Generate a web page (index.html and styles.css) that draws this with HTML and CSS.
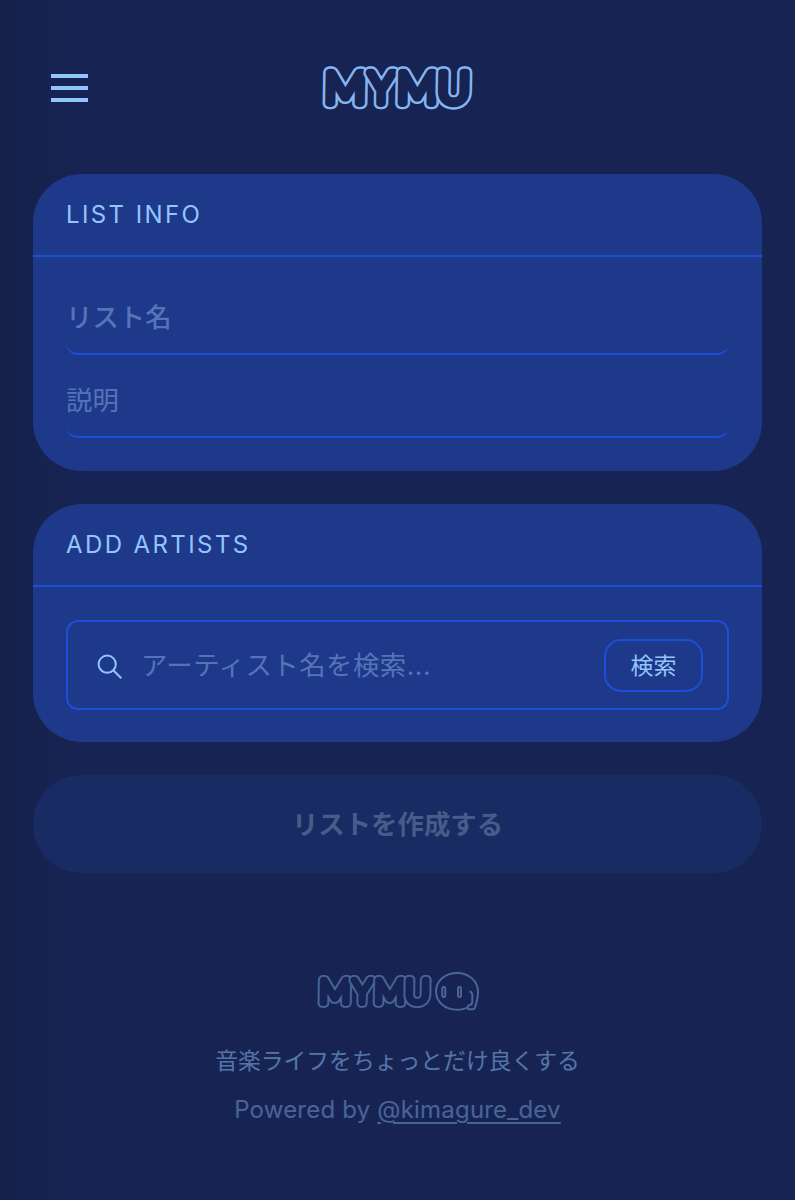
FILE: index.html
```html
<!DOCTYPE html>
<html lang="ja">
<head>
  <meta charset="UTF-8" />
  <meta name="viewport" content="width=device-width, initial-scale=1.0"/>
  <title>MYMU</title>
  <link rel="stylesheet" href="styles.css">
</head>
<body>
  <header class="header">
    <button class="menu-btn" aria-label="menu"><span></span><span></span><span></span></button>
    <svg class="logo" width="151" height="44" viewBox="0 0 151 44">
      <g class="letters" id="wordmark">
        <g transform="translate(23 37) skewX(-1)"><text class="edge" textLength="41" lengthAdjust="spacingAndGlyphs">M</text><text class="fill" textLength="41" lengthAdjust="spacingAndGlyphs">M</text></g>
        <g transform="translate(59 37) skewX(-1)"><text class="edge" textLength="25" lengthAdjust="spacingAndGlyphs">Y</text><text class="fill" textLength="25" lengthAdjust="spacingAndGlyphs">Y</text></g>
        <g transform="translate(95 37) skewX(-1)"><text class="edge" textLength="40" lengthAdjust="spacingAndGlyphs">M</text><text class="fill" textLength="40" lengthAdjust="spacingAndGlyphs">M</text></g>
        <g transform="translate(131.5 37) skewX(-1)"><text class="edge" textLength="32" lengthAdjust="spacingAndGlyphs">U</text><text class="fill" textLength="32" lengthAdjust="spacingAndGlyphs">U</text></g>
      </g>
    </svg>
  </header>

  <main class="container">
    <section class="card">
      <h2>LIST INFO</h2>
      <div class="card-body info-body">
        <input class="field name" type="text" placeholder="リスト名">
        <input class="field" type="text" placeholder="説明">
      </div>
    </section>

    <section class="card">
      <h2>ADD ARTISTS</h2>
      <div class="card-body">
        <div class="search-box">
          <svg class="search-icon" width="26" height="26" viewBox="0 0 26 26">
            <circle cx="10.2" cy="10.2" r="8.6"/>
            <path d="M16.5 16.5 L24.3 24.3"/>
          </svg>
          <input class="search-input" type="text" placeholder="アーティスト名を検索...">
          <button class="search-btn">検索</button>
        </div>
      </div>
    </section>

    <button class="create-btn" disabled>リストを作成する</button>
  </main>

  <footer class="footer">
    <div class="footer-logo">
      <svg width="115" height="33.5" viewBox="0 0 151 44"><use href="#wordmark"/></svg>
      <svg class="face" width="44" height="39" viewBox="0 0 44 39">
        <path d="M33 35 C30 37 26 37.8 22 37.8 C10 37.8 1 30 1 19.5 C1 9 10 1 22 1 C34 1 43 9 43 20 C43 26 41.5 31 39.8 36 Q39.3 37.3 38 37.3 H34 Q32.3 37.3 32.6 35.3 Q33 33 35 33 Q37.3 32.5 37.3 29.5 V23 Q37.3 20 34.5 19.5"/>
        <rect x="7.3" y="15" width="3" height="10" rx="1.2"/>
        <rect x="23" y="15" width="3" height="10" rx="1.2"/>
      </svg>
    </div>
    <p class="tagline">音楽ライフをちょっとだけ良くする</p>
    <p class="powered">Powered by <a href="#">@kimagure_dev</a></p>
  </footer>
</body>
</html>
```
FILE: styles.css
```css
* {
  box-sizing: border-box;
}
body {
  margin: 0;
  min-height: 1200px;
  background: linear-gradient(to right, #15214b 0, #172453 80px, #172453 100%);
  color: #93c5fd;
  font-family: Inter, "Noto Sans CJK JP", sans-serif;
}
button, input {
  font-family: inherit;
  color: inherit;
  background: none;
  border: none;
  padding: 0;
  margin: 0;
  outline: none;
}
.letters {
  font-family: Lato, sans-serif;
  font-size: 43px;
  font-weight: 300;
  text-anchor: middle;
  stroke-linejoin: round;
}
.edge {
  fill: #85b6f3;
  stroke: #85b6f3;
  stroke-width: 12.6px;
}
.fill {
  fill: #172453;
  stroke: #172453;
  stroke-width: 7.8px;
}
.header {
  display: grid;
  grid-template-columns: 1fr auto 1fr;
  align-items: center;
  height: 174px;
  padding: 2px 51px 0;
}
.logo {
  overflow: visible;
}
.menu-btn {
  display: flex;
  flex-direction: column;
  gap: 8px;
  width: 37px;
}
.menu-btn span {
  height: 4px;
  background: #93c5fd;
}
.container {
  display: flex;
  flex-direction: column;
  gap: 33px;
  padding: 0 33px;
}
.card {
  background: #1e3989;
  border-radius: 49px;
}
.card h2 {
  height: 83px;
  margin: 0;
  padding: 0 33px;
  border-bottom: 2px solid #1d4ed8;
  font-size: 24px;
  font-weight: 400;
  line-height: 81px;
  letter-spacing: 2.4px;
}
.card-body {
  padding: 33px;
}
.card-body:not(.info-body) {
  padding-bottom: 32px;
}
.info-body {
  padding-top: 23px;
}
.field {
  display: block;
  width: 100%;
  height: 75px;
  border-bottom: 2px solid #1d4ed8;
  border-radius: 12px;
  font-size: 26.4px;
}
.field + .field {
  margin-top: 8px;
  padding-top: 1px;
}
.field::placeholder, .search-input::placeholder {
  color: #9dbef5;
  opacity: 0.44;
}
.name {
  font-weight: 500;
}
.search-box {
  display: flex;
  align-items: center;
  height: 90px;
  padding: 0 24px 0 29px;
  border: 2px solid #1d4ed8;
  border-radius: 12px;
}
.search-icon {
  margin-top: 3px;
  fill: none;
  stroke: #93c5fd;
  stroke-width: 2;
}
.search-input {
  flex: 1;
  min-width: 0;
  margin-left: 18px;
  font-size: 26.4px;
  letter-spacing: 0.5px;
}
.search-btn {
  width: 99px;
  height: 53px;
  padding-bottom: 3px;
  border: 2px solid #1d4ed8;
  border-radius: 17px;
  font-size: 23px;
}
.create-btn {
  height: 98px;
  padding-bottom: 3px;
  border-radius: 49px;
  background: #192b63;
  color: #485b89;
  font-size: 26.4px;
  font-weight: 600;
}
.footer {
  padding-top: 99px;
  text-align: center;
  color: #93c5fd;
}
.footer-logo {
  display: flex;
  justify-content: center;
  align-items: center;
  gap: 3px;
  opacity: 0.45;
}
.face {
  fill: none;
  stroke: #85b6f3;
  stroke-width: 2;
}
.tagline, .powered {
  margin: 0;
  opacity: 0.5;
}
.tagline {
  margin-top: 33px;
  font-size: 22.8px;
  line-height: 34px;
}
.powered {
  margin-top: 14px;
  font-size: 24px;
  line-height: 36px;
  letter-spacing: 0.2px;
  opacity: 0.4;
}
.powered a {
  color: inherit;
  text-underline-offset: 4px;
  text-decoration-thickness: 2px;
}
```
